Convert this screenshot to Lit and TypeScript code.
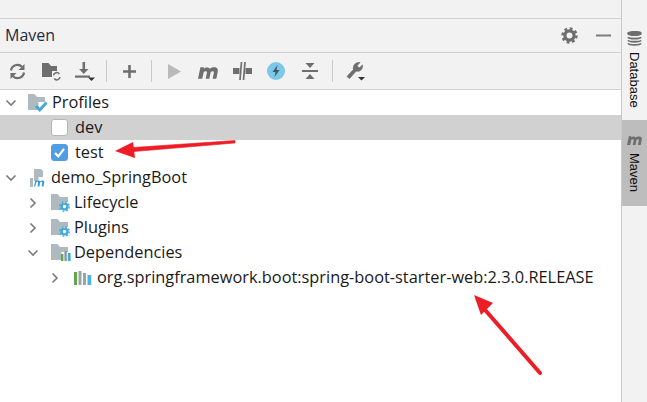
import { LitElement, html, css, svg } from "lit";
import { customElement } from "lit/decorators.js";

const chev = (open: boolean) => html`<svg class="chev" width="16" height="16" viewBox="0 0 16 16" fill="none" stroke="#7a7a7a" stroke-width="1.6">
  ${open ? svg`<path d="M3.500 5.500 8 10l4.500-4.500"/>` : svg`<path d="M5.500 3.500 10 8l-4.500 4.500"/>`}</svg>`;

const folder = (badge: unknown) => html`<svg class="ico" width="21" height="19" viewBox="0 0 21 19">
  <path d="M1 1h6.500l2.500 3h8v5h-6.500v8H1z" fill="#afb9c0"/>${badge}</svg>`;

const gear = svg`<g transform="translate(14.500 13.500)"><circle r="2.900" fill="none" stroke="#3fa9dc" stroke-width="2.400"/><circle r="4.700" fill="none" stroke="#3fa9dc" stroke-width="1.400" stroke-dasharray="1.800 1.900"/></g>`;
const bars = svg`<rect x="11" y="11" width="2.400" height="7" fill="#62a84a"/><rect x="14.400" y="8" width="2.400" height="10" fill="#8c979e"/><rect x="17.800" y="10" width="2.800" height="8" fill="#3fa9dc"/>`;
const check = svg`<path d="M9 13l3.800 4L19.500 9.500" fill="none" stroke="#3fa9dc" stroke-width="2.800"/>`;
const mPath = "M0 14 2.300 3h3.400l-.3 1.400C7 2.800 10 2.500 11 4.500 12.700 2.800 17 2.300 18.500 4.500c.5 1 .4 2 .2 3L17.400 14h-3.500l1.200-6c.2-1.600-1.800-1.700-3-.6L10.800 14H7.300l1.200-6c.2-1.600-1.800-1.700-3-.6L4 14z";

@customElement("app-root")
export class AppRoot extends LitElement {
  static styles = css`
    :host { display: block; width: 647px; height: 402px; position: relative; overflow: hidden;
      font-family: "Open Sans", "Noto Sans", sans-serif; color: #1a1a1a; background: #f2f2f2; }
    .frame { display: flex; height: 402px; }
    .main { width: 621px; display: flex; flex-direction: column; border-right: 1px solid #c9c9c9; box-sizing: content-box; }
    .strip { height: 18px; border-bottom: 1px solid #d1d1d1; flex: none; }
    .head { height: 33px; flex: none; display: flex; align-items: center; padding: 0 10px 0 5px; border-bottom: 1px solid #d1d1d1; font-size: 16px; line-height: 30px; color: #1f2d3d; }
    .head .title { flex: 1; margin-top: -2px; }
    .head .acts { display: flex; align-items: center; gap: 18px; }
    .tools { height: 36px; flex: none; display: flex; align-items: center; border-bottom: 1px solid #d1d1d1; }
    .btn { width: 34px; height: 24px; display: flex; align-items: center; justify-content: center; flex: none; }
    .sep { width: 1px; height: 22px; background: #c9c9c9; margin: 0 5px; flex: none; }
    .sep.first { margin-left: 4px; }
    .tree { flex: 1; background: #fff; font-size: 16.35px; }
    .row { height: 25px; line-height: 23px; display: flex; align-items: center; white-space: nowrap; }
    .row.sel { background: #d1d1d1; }
    .chev, .ico { flex: none; }
    .l0 { padding-left: 3px; }
    .l1 { padding-left: 25px; }
    .l2 { padding-left: 47px; }
    .prof-ico { margin-left: 8px; margin-right: 4px; display: flex; }
    .demo-ico { margin-left: 10px; margin-right: 2px; display: flex; }
    .gap-a { margin-left: 9px; margin-right: 3px; display: flex; }
    .gap-b { margin-left: 11px; margin-right: 5px; display: flex; }
    .boxrow { padding-left: 51px; }
    .box { width: 17px; height: 17px; border-radius: 3px; box-sizing: border-box; background: #fff; border: 1px solid #b5b5b5; margin-right: 7px; flex: none; display: flex; align-items: center; justify-content: center; }
    .box.on { background: #4f9ee3; border-color: #4f9ee3; }
    .rail { flex: 1; display: flex; flex-direction: column; padding-top: 19px; }
    .tab { display: flex; flex-direction: column; align-items: center; box-sizing: border-box; font-size: 13px; font-family: "Liberation Sans", Arial, sans-serif; color: #111; }
    .tab.db { height: 101px; padding-top: 12px; gap: 6px; }
    .tab.mv { height: 86px; background: #bdbdbd; padding-top: 14px; gap: 8px; }
    .vert { writing-mode: vertical-rl; }
    .over { position: absolute; left: 0; top: 0; pointer-events: none; }
  `;

  render() {
    return html`<div class="frame">
      <div class="main">
        <div class="strip"></div>
        <div class="head"><span class="title">Maven</span>
          <span class="acts">
            <svg width="17" height="17" viewBox="0 0 17 17"><circle cx="8.500" cy="8.500" r="4.600" fill="none" stroke="#6e6e6e" stroke-width="3.200"/><circle cx="8.500" cy="8.500" r="7" fill="none" stroke="#6e6e6e" stroke-width="2.400" stroke-dasharray="2.800 2.700"/></svg>
            <svg width="15" height="3" viewBox="0 0 15 3"><rect width="15" height="2" y=".5" fill="#7d7d7d"/></svg>
          </span></div>
        <div class="tools">
          <span class="btn"><svg width="17" height="17" viewBox="0 0 17 17" fill="none" stroke="#6e6e6e" stroke-width="2.200"><path d="M2 7.500A6.500 6.500 0 0 1 13 3.800M15 9.500A6.500 6.500 0 0 1 4 13.200"/><path d="M9.500 7h6V1z M7.500 10h-6v6z" fill="#6e6e6e" stroke="none"/></svg></span>
          <span class="btn"><svg width="21" height="19" viewBox="0 0 21 19"><path d="M1 1h6.500l2.500 3h6v5h-5v6H1z" fill="#6e6e6e"/><path d="M12.500 13.500a3.200 3.200 0 0 1 5.800-1.500M19 15a3.200 3.200 0 0 1-5.800 1.500" fill="none" stroke="#6e6e6e" stroke-width="1.500"/></svg></span>
          <span class="btn"><svg width="20" height="19" viewBox="0 0 20 19"><path d="M7.500 0h2.600v7h3.400l-4.700 5-4.700-5h3.400z" fill="#6e6e6e"/><rect x="0" y="13.500" width="15" height="2.200" fill="#6e6e6e"/><path d="M13 15.500h7l-3.500 3.500z" fill="#333"/></svg></span>
          <span class="sep first"></span>
          <span class="btn"><svg width="15" height="15" viewBox="0 0 15 15"><path d="M6.200 1h2.600v5.200H14v2.600H8.800V14H6.200V8.800H1V6.200h5.200z" fill="#6e6e6e"/></svg></span>
          <span class="sep"></span>
          <span class="btn"><svg width="13" height="15" viewBox="0 0 13 15"><path d="M0 0l13 7.500L0 15z" fill="#b9b9b9"/></svg></span>
          <span class="btn"><svg width="20" height="15" viewBox="0 0 19 14"><path d="${mPath}" fill="#6e6e6e"/></svg></span>
          <span class="btn"><svg width="19" height="18" viewBox="0 0 19 18"><path d="M0 6h6.500v6H0zM12.500 6H19v6h-6.500z" fill="#6e6e6e"/><path d="M8.500 0 7 18M12 0l-1.500 18" stroke="#6e6e6e" stroke-width="1.700"/></svg></span>
          <span class="btn"><svg width="18" height="18" viewBox="0 0 18 18"><circle cx="9" cy="9" r="9" fill="#7cc8e8"/><path d="M10.500 3 5.500 10h3l-1 5 5-7h-3z" fill="#40566a"/></svg></span>
          <span class="btn"><svg width="16" height="16" viewBox="0 0 16 16"><path d="M3.500 0h9L8 5z M3.500 16h9L8 11z" fill="#6e6e6e"/><rect y="7" width="16" height="2" fill="#6e6e6e"/></svg></span>
          <span class="sep"></span>
          <span class="btn"><svg width="19" height="20" viewBox="0 0 19 20"><path d="M1 15.500 7.500 8.500C6.500 4.500 9.500 1 14 1.500L11 4.700l2.300 2.300 3.200-3c.6 4.300-3 7.200-6.300 6L3.500 17.500z" fill="#6e6e6e" stroke="#6e6e6e" stroke-width=".8"/><path d="M12 16h7l-3.500 3.500z" fill="#333"/></svg></span>
        </div>
        <div class="tree">
          <div class="row l0">${chev(true)}<span class="prof-ico">${folder(check)}</span><span>Profiles</span></div>
          <div class="row sel boxrow"><span class="box"></span><span>dev</span></div>
          <div class="row boxrow"><span class="box on"><svg width="15" height="15" viewBox="0 0 15 15"><path d="M3 8 6.300 11.300 12 3.800" fill="none" stroke="#fff" stroke-width="2.200"/></svg></span><span>test</span></div>
          <div class="row l0">${chev(true)}<span class="demo-ico"><svg width="20" height="20" viewBox="0 0 20 20"><path d="M5 1h7l2 2v6H9.500v4H5z M1 10h3v9H1z" fill="#afb9c0"/><path d="M5 18.500l1.300-6h1.800l-.1.900c1-1.200 2.700-1.300 3.200 0 1.100-1.300 3.900-1.500 4.100.6l-.8 4.500h-1.900l.7-3.800c0-1.200-1.400-1-2.100-.2l-.8 4h-1.900l.7-3.800c0-1.200-1.400-1-2.100-.2l-.8 4z" fill="#2f9fd8"/></svg></span><span>demo_SpringBoot</span></div>
          <div class="row l1">${chev(false)}<span class="gap-a">${folder(gear)}</span><span>Lifecycle</span></div>
          <div class="row l1">${chev(false)}<span class="gap-a">${folder(gear)}</span><span>Plugins</span></div>
          <div class="row l1">${chev(true)}<span class="gap-a">${folder(bars)}</span><span>Dependencies</span></div>
          <div class="row l2">${chev(false)}<span class="gap-b"><svg class="ico" width="18" height="16" viewBox="0 0 18 16"><rect x="0" y="2" width="3" height="13" fill="#62a84a"/><rect x="4.500" y="1" width="3" height="14" fill="#9aa5ab"/><rect x="9" y="3" width="3" height="12" fill="#9aa5ab"/><rect x="13.500" y="5" width="3.800" height="10" fill="#4fb3e0"/></svg></span><span>org.springframework.boot:spring-boot-starter-web:2.3.0.RELEASE</span></div>
        </div>
      </div>
      <div class="rail">
        <div class="tab db"><svg width="15" height="15" viewBox="0 0 15 15" fill="none" stroke="#6e6e6e" stroke-width="1.800"><ellipse cx="7.500" cy="2.500" rx="6.500" ry="1.700" fill="#6e6e6e"/><path d="M1 6.200c1 1.800 12 1.800 13 0M1 9.400c1 1.800 12 1.800 13 0M1 12.400c1 1.900 12 1.900 13 0"/></svg><span class="vert">Database</span></div>
        <div class="tab mv"><svg width="15" height="11" viewBox="0 0 19 14"><path d="${mPath}" fill="#6e6e6e"/></svg><span class="vert">Maven</span></div>
      </div>
    </div>
    <svg class="over" width="647" height="402" viewBox="0 0 647 402">
      <path d="M235 140.500 235 143 134 151.500 133 147.500z" fill="#ee1c25" stroke="#ee1c25" stroke-width=".6" stroke-linejoin="round"/>
      <path d="M115 151 133 142 135 158z" fill="#ee1c25"/>
      <path d="M540 373 486 311" stroke="#ee1c25" stroke-width="4" stroke-linecap="round" fill="none"/>
      <path d="M474 295 493 303 481 315z" fill="#ee1c25"/>
    </svg>`;
  }
}
